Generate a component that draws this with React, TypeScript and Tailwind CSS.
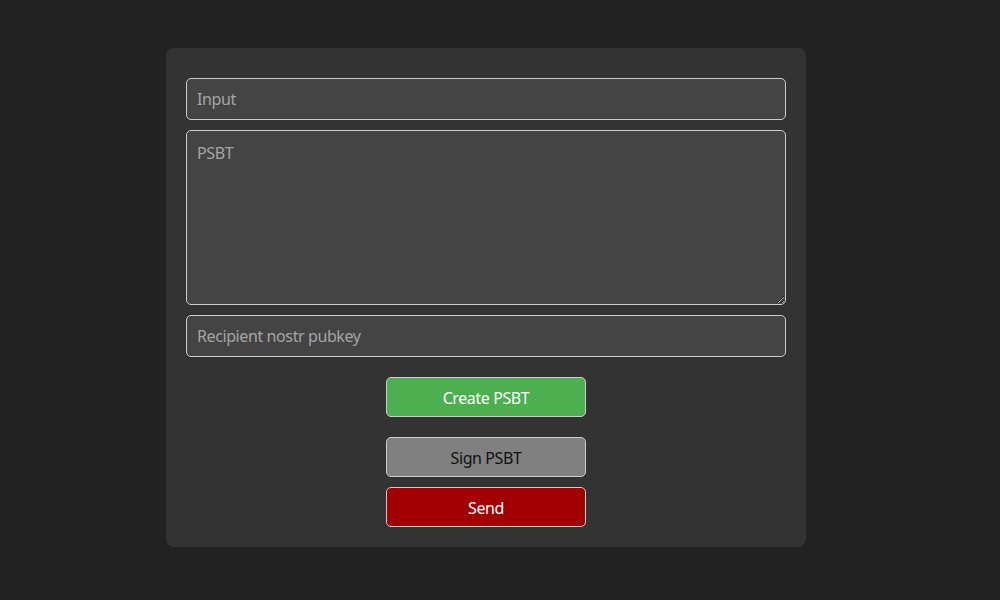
import React from "react";

export default function App() {
  const field =
    "w-full bg-[#444444] border border-[#cccccc] rounded-[5px] px-[10px] text-[16px] tracking-[-0.4px] text-white placeholder-[#a4a4a4] outline-none";
  const btn = "w-[200px] h-[40px] pt-[1px] border border-[#cccccc] rounded-[5px] text-[16px] tracking-[-0.4px]";
  return (
    <div className="min-h-[600px] w-full bg-[#222222] pt-[48px]" style={{ fontFamily: '"Noto Sans", "Open Sans", sans-serif' }}>
      <div className="w-[972px] flex justify-center">
        <div className="w-[640px] h-[499px] bg-[#333333] rounded-[8px] px-[20px] pt-[30px] pb-[20px] flex flex-col">
          <input className={field + " h-[42px]"} placeholder="Input" />
          <textarea className={field + " h-[175px] mt-[10px] py-[10px] block"} placeholder="PSBT" />
          <input className={field + " h-[42px] mt-[10px]"} placeholder="Recipient nostr pubkey" />
          <div className="flex flex-col items-center mt-[20px]">
            <button className={btn + " bg-[#4caf50] text-white"}>Create PSBT</button>
            <button className={btn + " mt-[20px] bg-[#808080] text-[#111111]"}>Sign PSBT</button>
            <button className={btn + " mt-[10px] bg-[#a00000] text-white"}>Send</button>
          </div>
        </div>
      </div>
    </div>
  );
}
